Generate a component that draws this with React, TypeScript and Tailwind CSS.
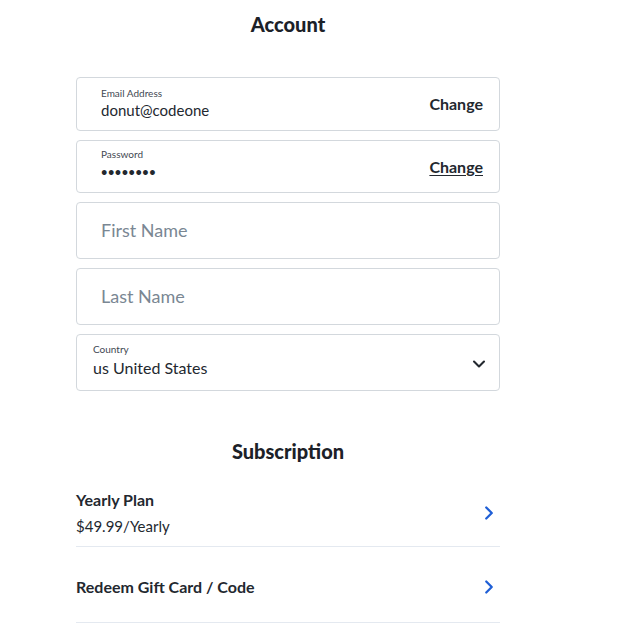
import { ChevronDown, ChevronRight } from 'lucide-react';

const font = { fontFamily: 'Lato, "Open Sans", Arial, sans-serif' };

function Field({
  label,
  value,
  action,
  underline,
  small,
}: {
  label: string;
  value: React.ReactNode;
  action: string;
  underline?: boolean;
  small?: boolean;
}) {
  return (
    <div
      className={[
        'flex items-center justify-between rounded-[4px] border border-[#d3d8dd] bg-white pl-6 pr-4',
        small ? 'h-[53px]' : 'h-[54px]',
      ].join(' ')}
    >
      <div className={['flex flex-col', small ? 'mb-[5px]' : 'mb-[3px]'].join(' ')}>
        <span className="text-[10px] leading-[14px] text-[#3f4852]">{label}</span>
        {value}
      </div>
      <button
        type="button"
        className={[
          'text-[16px] font-bold text-[#23282f]',
          underline ? 'underline underline-offset-2' : '',
        ].join(' ')}
      >
        {action}
      </button>
    </div>
  );
}

function Placeholder({ text }: { text: string }) {
  return (
    <div className="flex h-[57px] items-center rounded-[4px] border border-[#d3d8dd] bg-white pl-6">
      <span className="text-[18px] text-[#7a8793]">{text}</span>
    </div>
  );
}

function Row({ title, sub }: { title: string; sub?: string }) {
  return (
    <div
      className={[
        'flex items-center justify-between border-b border-[#e4e9f0]',
        sub ? 'h-[67px] pb-[2px] pt-[2px]' : 'h-[76px] pt-1',
      ].join(' ')}
    >
      <div className="flex flex-col">
        <span className="text-[16px] font-bold leading-[20px] text-[#23282f]">{title}</span>
        {sub && <span className="mt-[6px] text-[15px] leading-[20px] text-[#23282f]">{sub}</span>}
      </div>
      <ChevronRight className="text-[#1f5fd6]" size={22} strokeWidth={2.5} />
    </div>
  );
}

export default function App() {
  return (
    <div className="min-h-[638px] w-[624px] bg-white" style={font}>
      <div className="w-[576px] pt-[12px]">
        <h1 className="text-center text-[20px] font-black leading-[24px] text-[#1c2128]">Account</h1>

        <div className="mx-auto mt-[41px] flex w-[424px] flex-col gap-[9px]">
          <Field
            label="Email Address"
            action="Change"
            value={<span className="text-[15px] leading-[20px] text-[#23282f]">donut@codeone</span>}
          />
          <Field
            label="Password"
            action="Change"
            underline
            small
            value={<span className="mt-[2px] text-[11px] font-bold leading-[18px] tracking-[0.5px] text-[#23282f]">••••••••</span>}
          />
          <Placeholder text="First Name" />
          <Placeholder text="Last Name" />
          <div className="flex h-[57px] items-center justify-between rounded-[4px] border border-[#d3d8dd] bg-white pl-4 pr-[10px]">
            <div className="mb-[5px] flex flex-col">
              <span className="text-[10px] leading-[14px] text-[#3f4852]">Country</span>
              <span className="mt-[2px] text-[16px] leading-[20px] text-[#23282f]">us United States</span>
            </div>
            <ChevronDown className="mt-[2px] text-[#23282f]" size={20} strokeWidth={2.5} />
          </div>
        </div>

        <h2 className="mt-[48px] text-center text-[20px] font-black leading-[24px] text-[#1c2128]">Subscription</h2>

        <div className="mx-auto mt-[17px] flex w-[424px] flex-col">
          <Row title="Yearly Plan" sub="$49.99/Yearly" />
          <Row title="Redeem Gift Card / Code" />
        </div>
      </div>
    </div>
  );
}
